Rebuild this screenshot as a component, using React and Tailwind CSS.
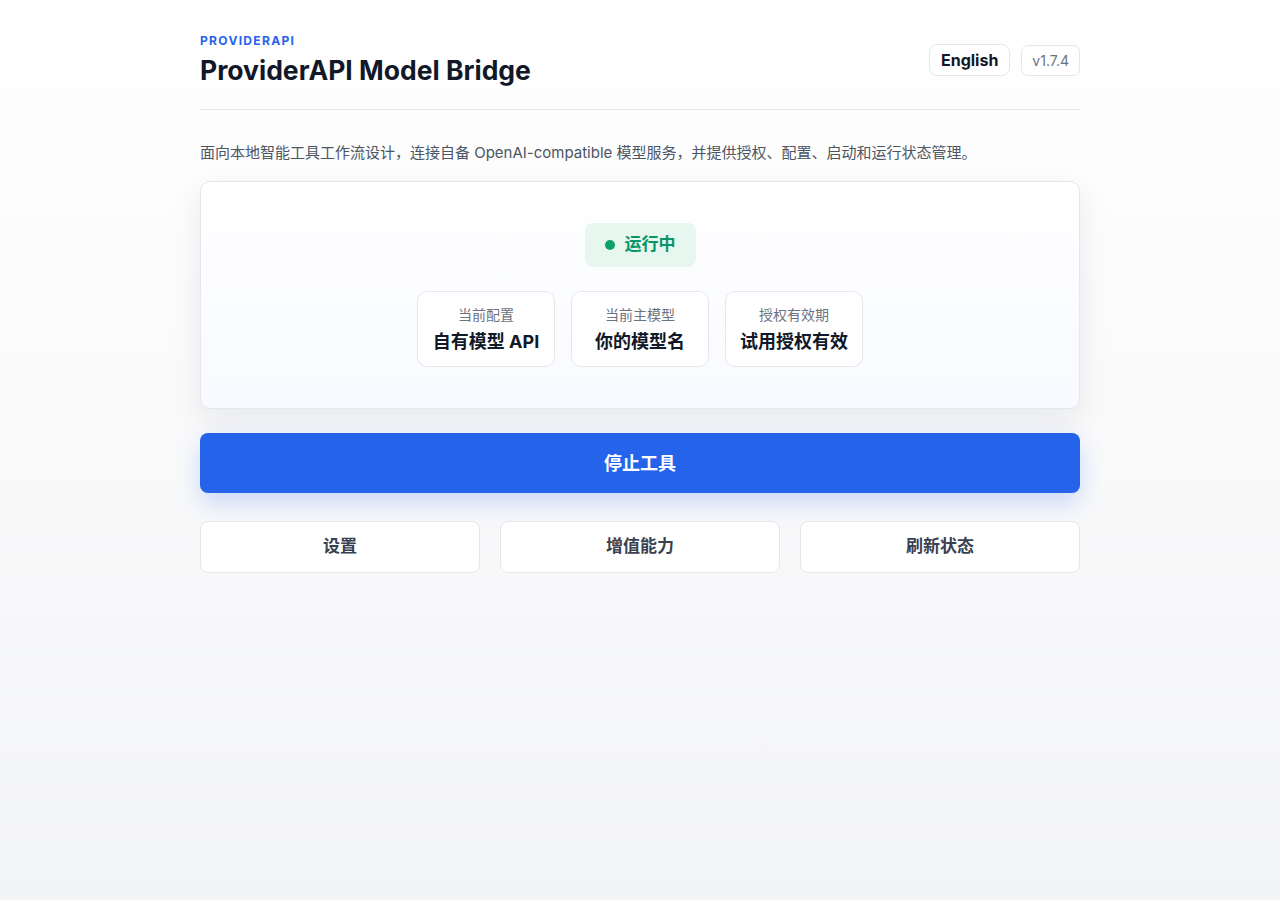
export default function App() {
  const stats = [
    { label: '当前配置', value: '自有模型 API' },
    { label: '当前主模型', value: '你的模型名' },
    { label: '授权有效期', value: '试用授权有效' },
  ];
  const actions = ['设置', '增值能力', '刷新状态'];

  return (
    <div
      className="min-h-[900px] w-full bg-gradient-to-b from-white to-[#f3f4f6] text-[#111827]"
      style={{ fontFamily: 'Inter, "Noto Sans", "Noto Sans CJK SC", sans-serif' }}
    >
      <div className="mx-auto w-[880px] pt-[33px]">
        {/* Header */}
        <header className="flex items-start justify-between border-b border-[#e5e7eb] pb-[22px]">
          <div>
            <div className="text-[12px] font-bold leading-[16px] tracking-[0.11em] text-[#2563eb]">PROVIDERAPI</div>
            <h1 className="mt-[4px] text-[26.5px] font-bold leading-[34px] text-[#111827]">ProviderAPI Model Bridge</h1>
          </div>
          <div className="mt-[11px] flex items-center gap-[11px]">
            <button className="h-[32px] rounded-[8px] border border-[#e5e7eb] bg-white px-[11px] text-[16px] font-bold text-[#111827]">
              English
            </button>
            <span className="flex h-[31px] items-center rounded-[7px] border border-[#e5e7eb] bg-white px-[10px] text-[14px] text-[#6b7280]">
              v1.7.4
            </span>
          </div>
        </header>

        <p className="mt-[32px] text-[15px] leading-[22px] text-[#4b5563]">
          面向本地智能工具工作流设计，连接自备 OpenAI-compatible 模型服务，并提供授权、配置、启动和运行状态管理。
        </p>

        {/* Status card */}
        <section className="mt-[17px] flex flex-col items-center rounded-[10px] border border-[#e5e7eb] bg-gradient-to-b from-white to-[#f8faff] pb-[41px] pt-[41px] shadow-[0_12px_32px_rgba(15,23,42,0.08)]">
          <div className="flex h-[44px] items-center gap-[10px] rounded-[8px] bg-[#e7f6ee] px-[20px] text-[17px] font-bold text-[#059669]">
            <span className="h-[10px] w-[10px] rounded-full bg-[#10a06a]" />
            运行中
          </div>
          <div className="mt-[24px] flex gap-[16px]">
            {stats.map(s => (
              <div
                key={s.label}
                className="flex h-[76px] w-[138px] flex-col items-center justify-center rounded-[10px] border border-[#e5e7eb] bg-white pt-[2px]"
              >
                <span className="text-[14px] leading-[18px] text-[#6b7280]">{s.label}</span>
                <span className="mt-[6px] text-[18px] font-bold leading-[24px] text-[#111827]">{s.value}</span>
              </div>
            ))}
          </div>
        </section>

        {/* Primary action */}
        <button className="mt-[24px] h-[60px] w-full rounded-[8px] bg-[#2563eb] text-[18px] font-bold text-white shadow-[0_10px_24px_rgba(37,99,235,0.22)]">
          停止工具
        </button>

        {/* Secondary actions */}
        <div className="mt-[28px] grid grid-cols-3 gap-[20px]">
          {actions.map(a => (
            <button
              key={a}
              className="h-[52px] rounded-[8px] border border-[#e5e7eb] bg-white text-[17px] font-bold text-[#374151]"
            >
              {a}
            </button>
          ))}
        </div>
      </div>
    </div>
  );
}
